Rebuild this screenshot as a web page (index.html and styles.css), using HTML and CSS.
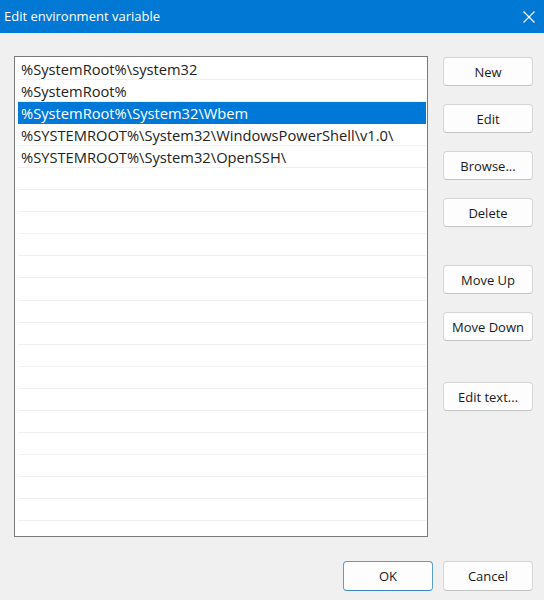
FILE: index.html
```html
<!DOCTYPE html>
<html>
<head>
<meta charset="utf-8">
<link rel="stylesheet" href="styles.css">
</head>
<body>
<div class="dialog">
  <div class="titlebar">
    <span class="title">Edit environment variable</span>
    <svg class="close" width="12" height="12" viewBox="0 0 12 12"><path d="M0.5 0.5 L11.5 11.5 M11.5 0.5 L0.5 11.5" stroke="#fff" stroke-width="1.2" fill="none"/></svg>
  </div>
  <div class="content">
    <div class="list">
      <div class="row">%SystemRoot%\system32</div>
      <div class="row">%SystemRoot%</div>
      <div class="row selected">%SystemRoot%\System32\Wbem</div>
      <div class="row">%SYSTEMROOT%\System32\WindowsPowerShell\v1.0\</div>
      <div class="row">%SYSTEMROOT%\System32\OpenSSH\</div>
      <div class="row"></div><div class="row"></div><div class="row"></div><div class="row"></div><div class="row"></div>
      <div class="row"></div><div class="row"></div><div class="row"></div><div class="row"></div><div class="row"></div>
      <div class="row"></div><div class="row"></div><div class="row"></div><div class="row"></div><div class="row"></div>
      <div class="row"></div>
    </div>
    <div class="buttons">
      <button class="btn">New</button>
      <button class="btn">Edit</button>
      <button class="btn">Browse...</button>
      <button class="btn">Delete</button>
      <button class="btn gap-up">Move Up</button>
      <button class="btn">Move Down</button>
      <button class="btn gap-edit">Edit text...</button>
    </div>
  </div>
  <div class="footer">
    <button class="btn default">OK</button>
    <button class="btn">Cancel</button>
  </div>
</div>
</body>
</html>
```
FILE: styles.css
```css
html, body {
  margin: 0;
  padding: 0;
  background: #f0f0f0;
}
body {
  font-family: "Open Sans", "Noto Sans", sans-serif;
  font-size: 14px;
  color: #1a1a1a;
  width: 544px;
  height: 600px;
  overflow: hidden;
}
.titlebar {
  height: 33px;
  background: #0078d4;
  display: flex;
  align-items: center;
  justify-content: space-between;
  padding: 0 8px 0 4px;
}
.title {
  color: #fff;
  font-size: 13px;
  margin-top: -1px;
}
.close {
  margin-right: 1px;
}
.content {
  display: flex;
  padding: 23px 0 0 14px;
  gap: 15px;
}
.list {
  box-sizing: border-box;
  width: 414px;
  height: 481px;
  background: #fff;
  border: 1px solid #7a7a7a;
  padding: 1px 1px 0 3px;
  overflow: hidden;
}
.row {
  height: 22.05px;
  box-sizing: border-box;
  border-bottom: 1px solid #f0f0f0;
  padding-left: 3px;
  line-height: 22px;
  font-size: 14.7px;
  white-space: nowrap;
  overflow: hidden;
  color: #222;
}
.row.selected {
  background: #0078d7;
  color: #fff;
  border-bottom-color: #0078d7;
}
.buttons {
  display: flex;
  flex-direction: column;
  gap: 18px;
  padding-top: 1px;
}
.btn {
  box-sizing: border-box;
  width: 90px;
  height: 29px;
  background: #fdfdfd;
  border: 1px solid #d6d6d6;
  border-bottom-color: #c4c4c4;
  border-radius: 4px;
  font-family: "Open Sans", "Noto Sans", sans-serif;
  font-size: 13px;
  color: #1a1a1a;
  padding: 0;
}
.gap-up {
  margin-top: 20px;
}
.gap-edit {
  margin-top: 23px;
}
.footer {
  display: flex;
  justify-content: flex-end;
  gap: 10px;
  padding: 24px 11px 0 0;
}
.footer .btn {
  height: 30px;
}
.btn.default {
  border: 1px solid #5a9bd0;
  border-bottom-color: #3d86c4;
}
```
